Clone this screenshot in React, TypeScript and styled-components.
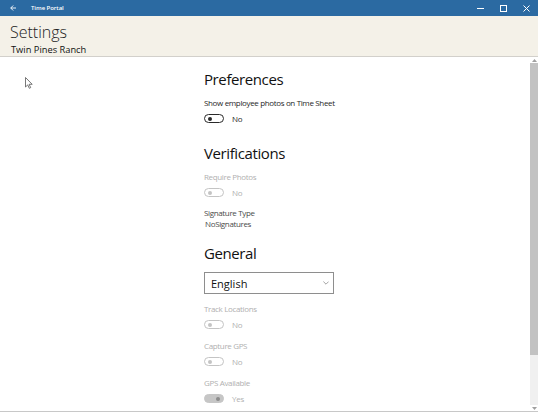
import React from "react";
import styled, { createGlobalStyle } from "styled-components";

const GlobalStyle = createGlobalStyle`
  html, body {
    margin: 0;
    padding: 0;
    background: #ffffff;
  }
  body {
    font-family: "Open Sans", "Noto Sans", sans-serif;
    color: #1f1f1f;
  }
`;

const Window = styled.div`
  position: relative;
  display: flex;
  flex-direction: column;
  width: 538px;
  height: 412px;
  overflow: hidden;
  background: #ffffff;
`;

const TitleBar = styled.div`
  display: flex;
  align-items: center;
  height: 16px;
  background: #2b6aa2;
  color: #ffffff;
  flex-shrink: 0;
`;

const BackButton = styled.div`
  display: flex;
  align-items: center;
  justify-content: center;
  width: 25px;
  height: 16px;
`;

const AppName = styled.span`
  margin-left: 6px;
  font-size: 6px;
  font-weight: 600;
  letter-spacing: -0.05px;
`;

const Controls = styled.div`
  display: flex;
  margin-left: auto;
  height: 16px;
`;

const ControlButton = styled.div`
  display: flex;
  align-items: center;
  justify-content: center;
  width: 23px;
  height: 16px;
`;

const Header = styled.div`
  display: flex;
  flex-direction: column;
  height: 40px;
  padding-left: 10px;
  background: #f4f1e8;
  border-bottom: 1px solid #d2d0cb;
  flex-shrink: 0;
`;

const PageTitle = styled.h1`
  margin: 6px 0 0;
  font-size: 16px;
  line-height: 20px;
  font-weight: 300;
  color: #222222;
`;

const Subtitle = styled.div`
  margin: 2px 0 0 1px;
  font-size: 9.3px;
  line-height: 11px;
  font-weight: 400;
  color: #111111;
`;

const Body = styled.div`
  display: flex;
  flex: 1;
  min-height: 0;
  border-bottom: 1px solid #c8c8c8;
`;

const Content = styled.div`
  display: flex;
  flex-direction: column;
  flex: 1;
  padding: 12px 0 0 204px;
`;

const Section = styled.section<{ $space: number }>`
  display: flex;
  flex-direction: column;
  margin-top: ${({ $space }) => $space}px;
`;

const SectionTitle = styled.h2`
  margin: 0 0 8px;
  font-size: 15px;
  line-height: 20px;
  font-weight: 400;
  color: #111111;
  letter-spacing: -0.4px;
`;

const Field = styled.div<{ $space?: number }>`
  display: flex;
  flex-direction: column;
  gap: 5px;
  margin-top: ${({ $space }) => $space ?? 0}px;
`;

const Label = styled.div<{ $disabled?: boolean }>`
  font-size: 8px;
  line-height: 12px;
  letter-spacing: -0.35px;
  color: ${({ $disabled }) => ($disabled ? "#b0b0b0" : "#1f1f1f")};
`;

const InfoText = styled.div<{ $indent?: number }>`
  font-size: 8px;
  line-height: 11px;
  letter-spacing: -0.35px;
  color: #4a4a4a;
  padding-left: ${({ $indent }) => $indent ?? 0}px;
`;

const ToggleRow = styled.div`
  display: flex;
  align-items: center;
  gap: 8px;
  height: 9px;
`;

const Track = styled.div<{ $on: boolean; $disabled: boolean }>`
  position: relative;
  box-sizing: border-box;
  width: 20px;
  height: 9px;
  border-radius: 5px;
  border: 1px solid
    ${({ $on, $disabled }) =>
      $on ? "#c6c6c6" : $disabled ? "#c4c4c4" : "#2a2a2a"};
  background: ${({ $on }) => ($on ? "#c6c6c6" : "#ffffff")};
`;

const Knob = styled.div<{ $on: boolean; $disabled: boolean }>`
  position: absolute;
  top: 50%;
  left: ${({ $on }) => ($on ? "11px" : "2.5px")};
  width: 4px;
  height: 4px;
  border-radius: 50%;
  transform: translateY(-50%);
  background: ${({ $on, $disabled }) =>
    $on ? "#8c8c8c" : $disabled ? "#c4c4c4" : "#2a2a2a"};
`;

const ToggleText = styled.span<{ $disabled: boolean }>`
  font-size: 8px;
  letter-spacing: -0.2px;
  color: ${({ $disabled }) => ($disabled ? "#b0b0b0" : "#1f1f1f")};
`;

const Select = styled.div`
  display: flex;
  align-items: center;
  box-sizing: border-box;
  width: 130px;
  height: 22px;
  margin-top: 1px;
  padding: 0 4px 0 6px;
  border: 1px solid #8e8e8e;
  font-size: 11px;
  color: #111111;
`;

const SelectValue = styled.span`
  flex: 1;
`;

const Scrollbar = styled.div`
  display: flex;
  flex-direction: column;
  width: 8px;
  background: #f0f0f0;
  flex-shrink: 0;
`;

const ScrollArrow = styled.div`
  display: flex;
  align-items: center;
  justify-content: center;
  height: 6px;
  background: #ffffff;
`;

const Thumb = styled.div`
  height: 292px;
  background: #c2c2c2;
`;

const ScrollTrack = styled.div`
  flex: 1;
`;

const Pointer = styled.svg`
  position: absolute;
  left: 25px;
  top: 77px;
`;

type ToggleProps = { on?: boolean; disabled?: boolean };

const Toggle = ({ on = false, disabled = false }: ToggleProps) => (
  <ToggleRow>
    <Track $on={on} $disabled={disabled}>
      <Knob $on={on} $disabled={disabled} />
    </Track>
    <ToggleText $disabled={disabled}>{on ? "Yes" : "No"}</ToggleText>
  </ToggleRow>
);

const App = () => {
  return (
    <Window>
      <GlobalStyle />
      <TitleBar>
        <BackButton>
          <svg width="6" height="6" viewBox="0 0 6 6">
            <path d="M6 3H0.8M3.2 0.5L0.7 3l2.5 2.5" fill="none" stroke="#fff" strokeWidth="0.9" />
          </svg>
        </BackButton>
        <AppName>Time Portal</AppName>
        <Controls>
          <ControlButton>
            <svg width="7" height="7" viewBox="0 0 7 7">
              <path d="M0 3.5h7" stroke="#fff" strokeWidth="1" />
            </svg>
          </ControlButton>
          <ControlButton>
            <svg width="7" height="7" viewBox="0 0 7 7">
              <rect x="0.5" y="0.5" width="6" height="6" fill="none" stroke="#fff" strokeWidth="1" />
            </svg>
          </ControlButton>
          <ControlButton>
            <svg width="7" height="7" viewBox="0 0 7 7">
              <path d="M0.5 0.5l6 6M6.5 0.5l-6 6" stroke="#fff" strokeWidth="1" />
            </svg>
          </ControlButton>
        </Controls>
      </TitleBar>

      <Header>
        <PageTitle>Settings</PageTitle>
        <Subtitle>Twin Pines Ranch</Subtitle>
      </Header>

      <Body>
        <Content>
          <Section $space={0}>
            <SectionTitle>Preferences</SectionTitle>
            <Field>
              <Label>Show employee photos on Time Sheet</Label>
              <Toggle />
            </Field>
          </Section>

          <Section $space={20}>
            <SectionTitle>Verifications</SectionTitle>
            <Field>
              <Label $disabled>Require Photos</Label>
              <Toggle disabled />
            </Field>
            <Field $space={10}>
              <div>
                <InfoText>Signature Type</InfoText>
                <InfoText $indent={1}>NoSignatures</InfoText>
              </div>
            </Field>
          </Section>

          <Section $space={14}>
            <SectionTitle>General</SectionTitle>
            <Select>
              <SelectValue>English</SelectValue>
              <svg width="6" height="4" viewBox="0 0 6 4">
                <path d="M0.4 0.6L3 3.2 5.6 0.6" fill="none" stroke="#8a8a8a" strokeWidth="0.8" />
              </svg>
            </Select>
            <Field $space={9}>
              <Label $disabled>Track Locations</Label>
              <Toggle disabled />
            </Field>
            <Field $space={11}>
              <Label $disabled>Capture GPS</Label>
              <Toggle disabled />
            </Field>
            <Field $space={11}>
              <Label $disabled>GPS Available</Label>
              <Toggle on disabled />
            </Field>
          </Section>
        </Content>

        <Scrollbar>
          <ScrollArrow>
            <svg width="5" height="3" viewBox="0 0 5 3">
              <path d="M0 3L2.5 0 5 3z" fill="#a0a0a0" />
            </svg>
          </ScrollArrow>
          <Thumb />
          <ScrollTrack />
          <ScrollArrow>
            <svg width="5" height="3" viewBox="0 0 5 3">
              <path d="M0 0L2.5 3 5 0z" fill="#a0a0a0" />
            </svg>
          </ScrollArrow>
        </Scrollbar>
      </Body>

      <Pointer width="8" height="12" viewBox="0 0 8 12">
        <path d="M0.5 0.5v9.5l2.2-2.1 1.6 3.4 1.4-0.7-1.6-3.3h3.1z" fill="#fff" stroke="#555" strokeWidth="0.8" />
      </Pointer>
    </Window>
  );
};

export default App;
